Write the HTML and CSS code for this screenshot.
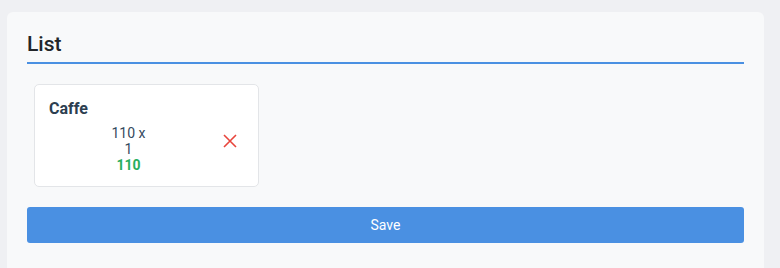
FILE: index.html
```html
<!DOCTYPE html>
<html lang="en">
<head>
    <meta charset="UTF-8">
    <meta name="viewport" content="width=device-width, initial-scale=1.0">
    <title>List</title>
    <link rel="stylesheet" href="styles.css">
</head>
<body>
    <!-- Order list panel -->
    <div class="panel">
        <h2 class="panel-title">List</h2>

        <div class="items">
            <div class="item-card">
                <div class="item-name">Caffe</div>
                <div class="item-row">
                    <div class="item-details">
                        <div>110 x</div>
                        <div>1</div>
                        <div class="item-total">110</div>
                    </div>
                    <button class="remove-btn" title="Remove">
                        <svg width="14" height="14" viewBox="0 0 14 14">
                            <path d="M1 1 L13 13 M13 1 L1 13" stroke="#e8453c" stroke-width="1.6" fill="none"/>
                        </svg>
                    </button>
                </div>
            </div>
        </div>

        <button class="save-btn">Save</button>
    </div>
</body>
</html>
```

FILE: styles.css
```css
/* General Styles */
body {
    font-family: Roboto, 'Liberation Sans', sans-serif;
    margin: 0;
    padding: 12px 16px 0 7px;
    background: #eff0f3;
    color: #2c3e50;
    height: 268px;
    box-sizing: border-box;
    overflow: hidden;
}

.panel {
    background: #f8f9fa;
    border-radius: 6px 6px 0 0;
    padding: 20px 20px 14px;
    height: 256px;
    box-sizing: border-box;
}

.panel-title {
    font-size: 21px;
    font-weight: 500;
    color: #212529;
    margin: 0 0 20px;
    padding-bottom: 6px;
    border-bottom: 2px solid #4a90e2;
    line-height: 24px;
}

.items {
    display: flex;
    gap: 12px;
    padding-left: 7px;
    margin-bottom: 20px;
}

.item-card {
    width: 225px;
    box-sizing: border-box;
    background: #fff;
    border: 1px solid #e3e5e8;
    border-radius: 5px;
    padding: 14px 14px 13px;
}

.item-name {
    font-size: 16px;
    font-weight: 700;
    color: #2c3e50;
    line-height: 20px;
    margin-bottom: 6px;
}

.item-row {
    display: flex;
    align-items: center;
}

.item-details {
    flex: 1;
    text-align: center;
    font-size: 14px;
    line-height: 16px;
    color: #34495e;
}

.item-total {
    color: #27ae60;
    font-weight: 700;
}

.remove-btn {
    width: 36px;
    margin-bottom: 14px;
    padding: 0 0 0 8px;
    border: none;
    background: none;
    cursor: pointer;
}

.save-btn {
    display: block;
    width: 100%;
    height: 36px;
    border: none;
    border-radius: 3px;
    background: #4a90e2;
    color: #fff;
    font-family: Roboto, 'Liberation Sans', sans-serif;
    font-size: 14px;
    cursor: pointer;
}
```
